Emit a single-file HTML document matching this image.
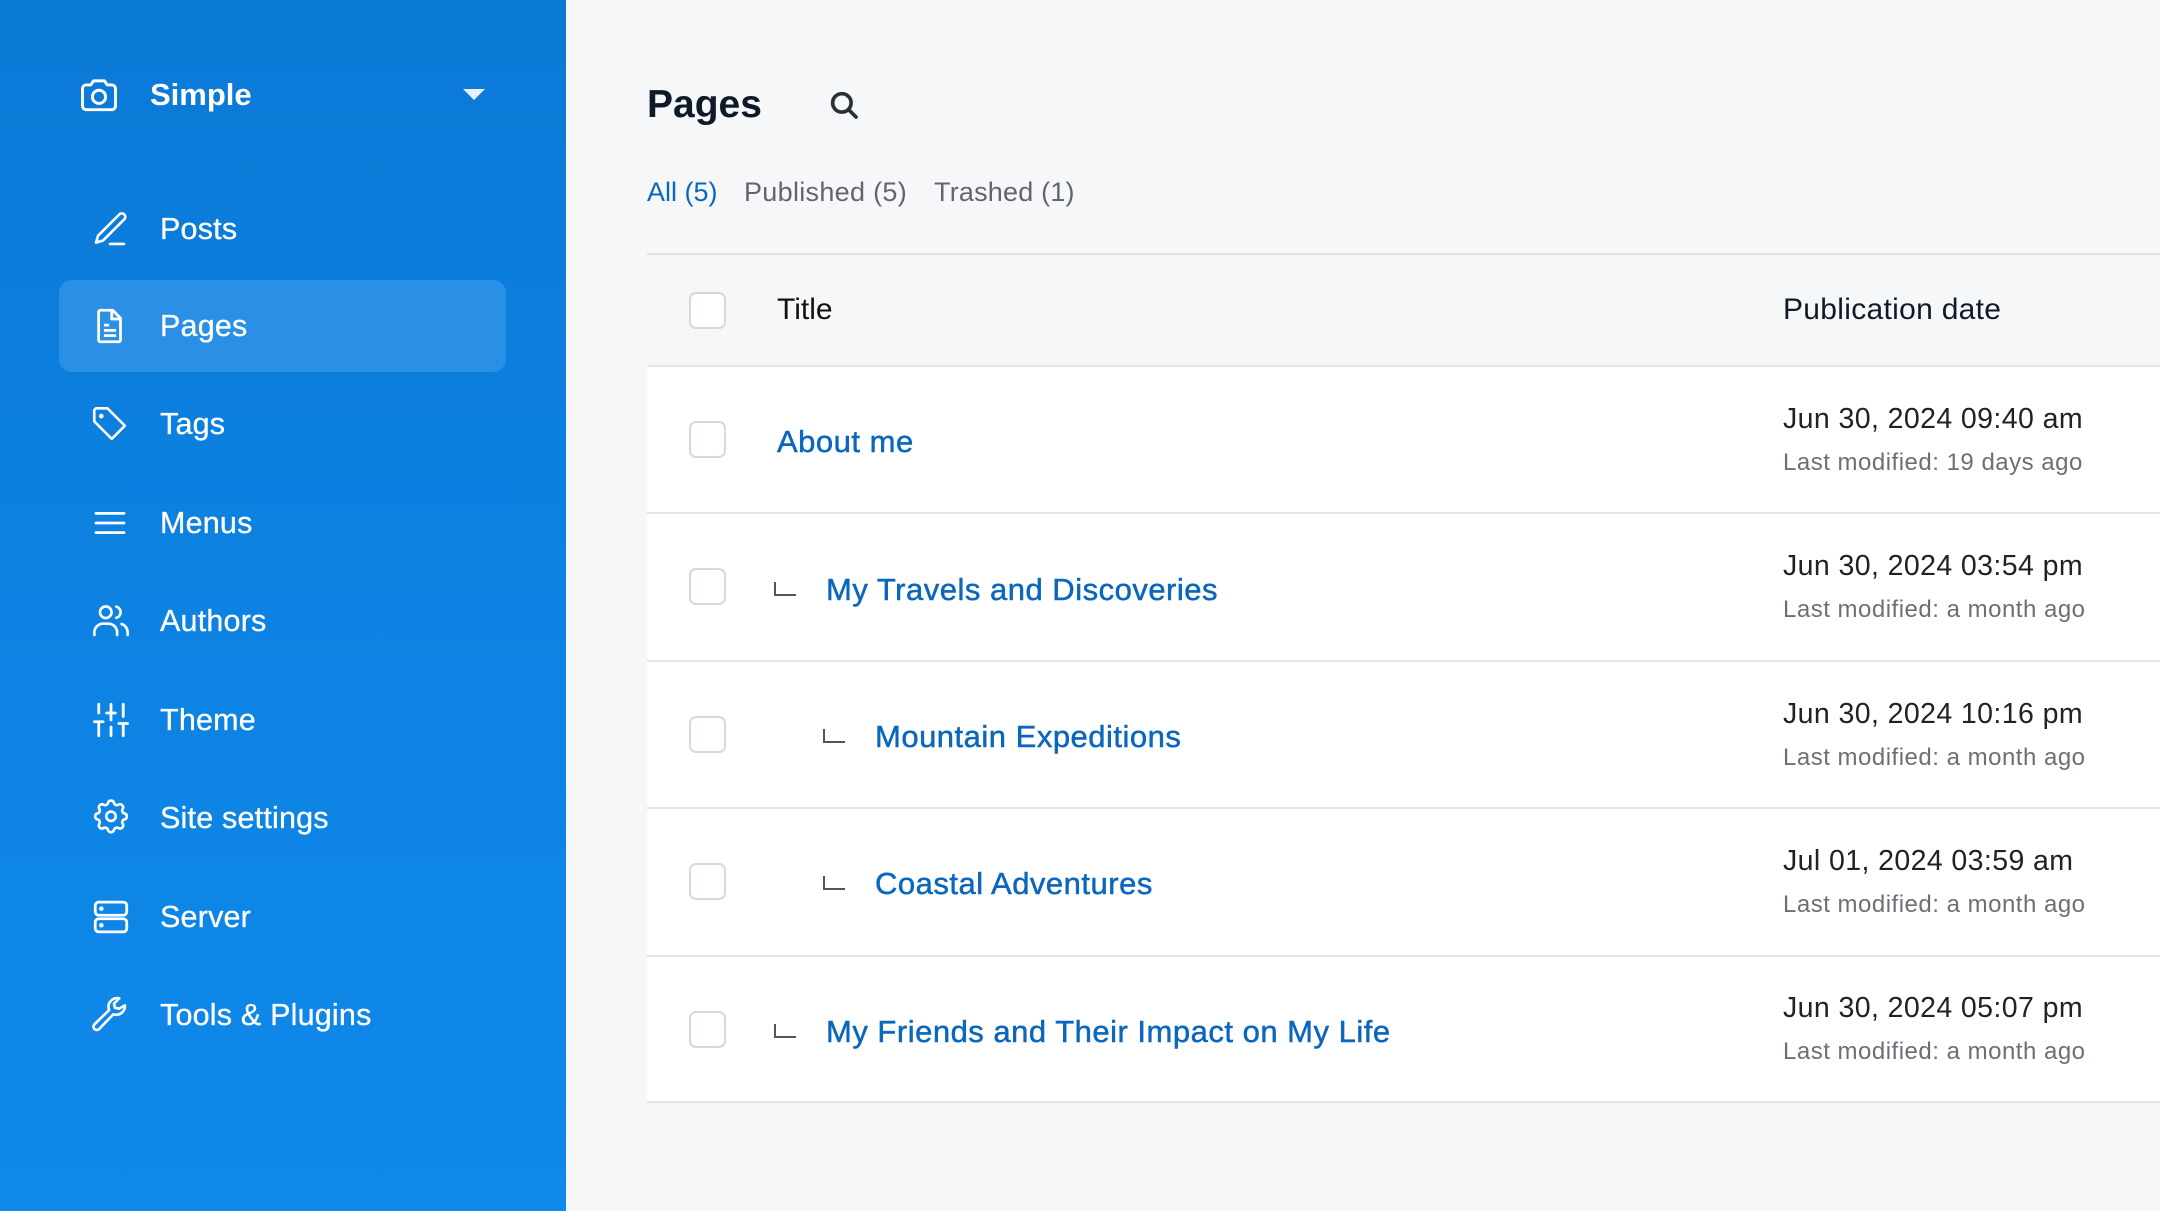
<!DOCTYPE html>
<html><head><meta charset="utf-8"><style>
*{margin:0;padding:0;box-sizing:border-box}
html,body{width:2160px;height:1211px;overflow:hidden;font-family:"Liberation Sans",sans-serif;background:#f6f7f9}
.side{position:absolute;left:0;top:0;width:566px;height:1211px;background:linear-gradient(180deg,#0b79d6 0%,#0d84e4 60%,#0f89ea 100%)}
.abs{position:absolute}
.nav{position:absolute;left:0;width:566px;height:60px;color:#fff;font-size:30.5px;line-height:60px}
.nav svg{position:absolute;left:89px;top:9px}
.nav span{position:absolute;left:160px;-webkit-text-stroke:0.3px #fff;letter-spacing:0.2px}
.active{position:absolute;left:59px;top:280px;width:447px;height:92px;border-radius:13px;background:#2a90e6}
.row{position:absolute;left:647px;width:1513px;background:#fff;border-bottom:2px solid #e3e5e9}
.cb{position:absolute;left:689px;width:37px;height:37px;border:2px solid #d6d8dc;border-radius:7px;background:#fff}
.t{position:absolute;font-size:31px;letter-spacing:0.5px;color:#0b67bd;-webkit-text-stroke:0.5px #0b67bd;white-space:nowrap}
.d{position:absolute;left:1783px;font-size:28.5px;letter-spacing:0.4px;color:#222;white-space:nowrap}
.m{position:absolute;left:1783px;font-size:24px;letter-spacing:0.5px;color:#6b7076;white-space:nowrap}
.ind{position:absolute;width:22px;height:14px;border-left:2px solid #555;border-bottom:2px solid #555}
</style></head><body>
<div class="side">
  <svg class="abs" style="left:76px;top:73px" width="46" height="44" viewBox="0 0 24 24" fill="none" stroke="#fff" stroke-width="1.6" stroke-linejoin="round"><path d="M3 8.5a2 2 0 0 1 2-2h2.5L9 4.3h6L16.5 6.5H19a2 2 0 0 1 2 2V18a2 2 0 0 1-2 2H5a2 2 0 0 1-2-2z"/><circle cx="12" cy="13" r="3.6"/></svg>
  <div class="abs" style="left:150px;top:76px;font-size:31px;color:#fff;font-weight:bold;line-height:38px">Simple</div>
  <svg class="abs" style="left:463px;top:89px" width="22" height="12" viewBox="0 0 22 12"><path d="M0 0h22L11 11z" fill="#e6f1fb"/></svg>
  <div class="active"></div>
  <div class="nav" style="top:199px"><svg width="42" height="42" viewBox="0 0 24 24" fill="none" stroke="#fff" stroke-width="1.5" stroke-linecap="round" stroke-linejoin="round"><path d="M17.5 3.5a2 2 0 0 1 2.8 2.8L8 18.6l-4 1.2 1.2-4z"/><path d="M12 20.5h8"/></svg><span>Posts</span></div>
  <div class="nav" style="top:296px"><svg width="42" height="42" viewBox="0 0 24 24" fill="none" stroke="#fff" stroke-width="1.6" stroke-linejoin="round"><path d="M6.5 3h7l4.5 4.5V20a1 1 0 0 1-1 1H6.5a1 1 0 0 1-1-1V4a1 1 0 0 1 1-1z"/><path d="M13 3v5h5M8.5 11.5h3M8.5 14.5h7M8.5 17.5h7"/></svg><span>Pages</span></div>
  <div class="nav" style="top:394px"><svg width="42" height="42" viewBox="0 0 24 24" fill="none" stroke="#fff" stroke-width="1.5" stroke-linejoin="round"><path d="M3 4v6.5l10 10 7.5-7.5-10-10H4z"/><circle cx="7" cy="7.5" r=".6" fill="#fff"/></svg><span>Tags</span></div>
  <div class="nav" style="top:493px"><svg width="42" height="42" viewBox="0 0 24 24" fill="none" stroke="#fff" stroke-width="1.6" stroke-linecap="round"><path d="M4 6.5h16M4 12h16M4 17.5h16"/></svg><span>Menus</span></div>
  <div class="nav" style="top:591px"><svg width="44" height="42" viewBox="0 0 24 24" fill="none" stroke="#fff" stroke-width="1.5" stroke-linecap="round"><circle cx="9" cy="7" r="3.3"/><path d="M2.5 20v-1.5a5 5 0 0 1 5-5h3a5 5 0 0 1 5 5V20M15 3.8a3.3 3.3 0 0 1 0 6.4M18 13.7a5 5 0 0 1 3.5 4.8V20"/></svg><span>Authors</span></div>
  <div class="nav" style="top:690px"><svg width="44" height="42" viewBox="0 0 24 24" fill="none" stroke="#fff" stroke-width="1.6" stroke-linecap="round"><path d="M5 3v5M5 13v8M12 3v9M12 16v5M19 3v7M19 14v7M2.5 13h5M9.5 8h5M16.5 14h5"/></svg><span>Theme</span></div>
  <div class="nav" style="top:788px"><svg width="44" height="42" viewBox="0 0 24 24" fill="none" stroke="#fff" stroke-width="1.5" stroke-linejoin="round"><path d="M10.3 3.3c.4-1.7 3-1.7 3.4 0a1.7 1.7 0 0 0 2.6 1.1c1.5-.9 3.3.8 2.4 2.4a1.7 1.7 0 0 0 1 2.6c1.8.4 1.8 3 0 3.4a1.7 1.7 0 0 0-1 2.6c.9 1.5-.8 3.3-2.4 2.4a1.7 1.7 0 0 0-2.6 1c-.4 1.8-3 1.8-3.4 0a1.7 1.7 0 0 0-2.6-1c-1.5.9-3.3-.8-2.4-2.4a1.7 1.7 0 0 0-1-2.6c-1.8-.4-1.8-3 0-3.4a1.7 1.7 0 0 0 1-2.6C4.4 5.3 6.2 3.5 7.7 4.4a1.7 1.7 0 0 0 2.6-1.1z"/><circle cx="12" cy="11" r="2.7"/></svg><span>Site settings</span></div>
  <div class="nav" style="top:887px"><svg width="44" height="42" viewBox="0 0 24 24" fill="none" stroke="#fff" stroke-width="1.6"><rect x="3" y="3.5" width="18" height="7.5" rx="2"/><rect x="3" y="13" width="18" height="7.5" rx="2"/><circle cx="6.5" cy="7.2" r=".5" fill="#fff"/><circle cx="6.5" cy="16.7" r=".5" fill="#fff"/></svg><span>Server</span></div>
  <div class="nav" style="top:985px"><svg width="42" height="42" viewBox="0 0 24 24" fill="none" stroke="#fff" stroke-width="1.5" stroke-linejoin="round"><path d="M20.5 6.5a5 5 0 0 1-6.6 5.1L5.8 20a1.9 1.9 0 0 1-2.7-2.7l8.4-8.1a5 5 0 0 1 5.8-6.7l-3 3 .5 2.4 2.4.5z"/></svg><span>Tools &amp; Plugins</span></div>
</div>

<div class="abs" style="left:647px;top:82px;font-size:39px;font-weight:bold;color:#0f1a28;line-height:46px">Pages</div>
<svg class="abs" style="left:827px;top:88px" width="34" height="34" viewBox="0 0 24 24" fill="none" stroke="#2b2f36" stroke-width="2.6" stroke-linecap="round"><circle cx="10.5" cy="10.5" r="6.5"/><path d="M15.5 15.5l5 5"/></svg>
<div class="abs" style="left:647px;top:176px;font-size:27px;color:#0b67bd;line-height:32px">All (5)</div>
<div class="abs" style="left:744px;top:176px;font-size:27px;color:#62666c;line-height:32px;letter-spacing:0.3px">Published (5)</div>
<div class="abs" style="left:934px;top:176px;font-size:27px;color:#62666c;line-height:32px;letter-spacing:0.2px">Trashed (1)</div>

<div class="abs" style="left:647px;top:253px;width:1513px;height:2px;background:#dfe1e5"></div>
<div class="cb" style="top:292px;background:#fff"></div>
<div class="abs" style="left:777px;top:292px;font-size:30px;color:#111;line-height:36px">Title</div>
<div class="abs" style="left:1783px;top:292px;font-size:30px;letter-spacing:0.3px;color:#0f1a28;line-height:36px">Publication date</div>

<div class="row" style="top:365px;height:149px;border-top:2px solid #e3e5e9"></div>
<div class="row" style="top:514px;height:148px"></div>
<div class="row" style="top:662px;height:147px"></div>
<div class="row" style="top:809px;height:148px"></div>
<div class="row" style="top:957px;height:146px"></div>

<div class="cb" style="top:421px"></div>
<div class="t" style="left:777px;top:424px;line-height:36px">About me</div>
<div class="d" style="top:403px">Jun 30, 2024 09:40 am</div>
<div class="m" style="top:449px">Last modified: 19 days ago</div>

<div class="cb" style="top:568px"></div>
<div class="ind" style="left:774px;top:582px"></div>
<div class="t" style="left:826px;top:572px;line-height:36px">My Travels and Discoveries</div>
<div class="d" style="top:550px">Jun 30, 2024 03:54 pm</div>
<div class="m" style="top:596px">Last modified: a month ago</div>

<div class="cb" style="top:716px"></div>
<div class="ind" style="left:823px;top:729px"></div>
<div class="t" style="left:875px;top:719px;line-height:36px">Mountain Expeditions</div>
<div class="d" style="top:698px">Jun 30, 2024 10:16 pm</div>
<div class="m" style="top:744px">Last modified: a month ago</div>

<div class="cb" style="top:863px"></div>
<div class="ind" style="left:823px;top:876px"></div>
<div class="t" style="left:875px;top:866px;line-height:36px">Coastal Adventures</div>
<div class="d" style="top:845px">Jul 01, 2024 03:59 am</div>
<div class="m" style="top:891px">Last modified: a month ago</div>

<div class="cb" style="top:1011px"></div>
<div class="ind" style="left:774px;top:1024px"></div>
<div class="t" style="left:826px;top:1014px;line-height:36px">My Friends and Their Impact on My Life</div>
<div class="d" style="top:992px">Jun 30, 2024 05:07 pm</div>
<div class="m" style="top:1038px">Last modified: a month ago</div>
</body></html>
